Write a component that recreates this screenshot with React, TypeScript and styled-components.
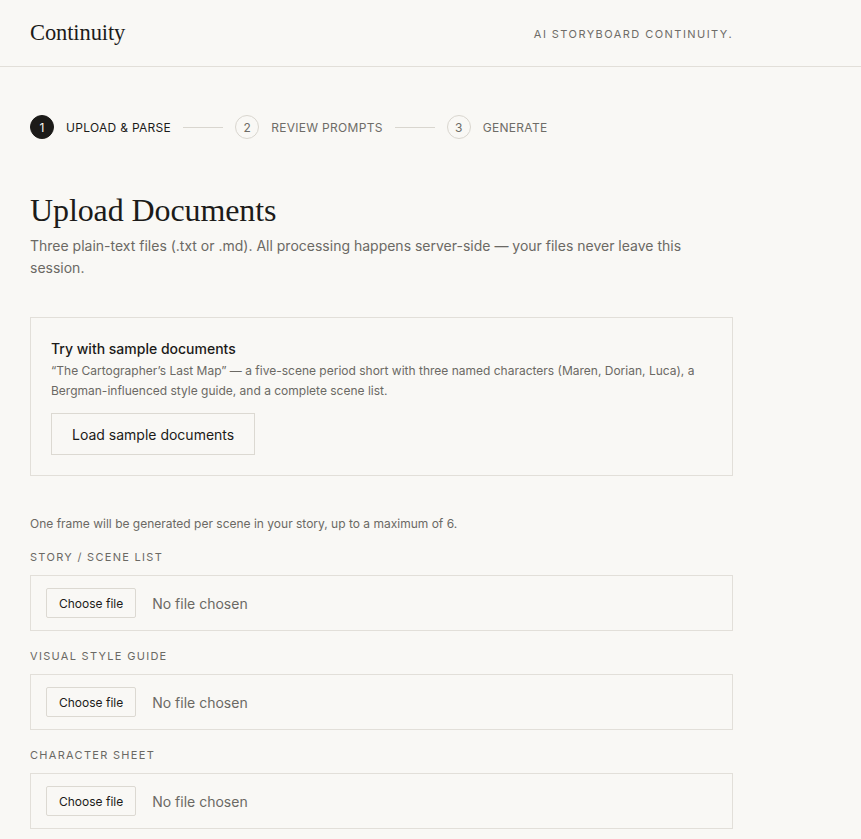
import React from "react";
import styled, { createGlobalStyle } from "styled-components";

const Global = createGlobalStyle`
  html, body { margin: 0; padding: 0; background: #f9f8f5; }
  body { font-family: Inter, "Noto Sans", sans-serif; color: #1c1b19; -webkit-font-smoothing: antialiased; }
  * { box-sizing: border-box; }
`;

const Header = styled.header`
  height: 67px;
  border-bottom: 1px solid #e2dfd9;
  display: flex;
`;

const HeaderInner = styled.div`
  width: 703px;
  margin-left: 30px;
  display: flex;
  align-items: center;
  justify-content: space-between;
`;

const Logo = styled.div`
  font-family: "Liberation Serif", "DejaVu Serif", serif;
  font-size: 22.5px;
  letter-spacing: -0.1px;
  color: #1c1b19;
  padding-bottom: 1px;
`;

const Tagline = styled.div`
  font-size: 11px;
  letter-spacing: 1.45px;
  color: #6e6c67;
  text-transform: uppercase;
  padding-top: 2px;
`;

const Main = styled.main`
  width: 703px;
  margin-left: 30px;
  padding-top: 48px;
`;

const Steps = styled.ol`
  list-style: none;
  margin: 0;
  padding: 0;
  display: flex;
  align-items: center;
  gap: 12px;
`;

const Step = styled.li`
  display: flex;
  align-items: center;
  gap: 12px;
`;

const StepNum = styled.span<{ $active?: boolean }>`
  width: 24px;
  height: 24px;
  border-radius: 50%;
  display: flex;
  align-items: center;
  justify-content: center;
  font-size: 12px;
  background: ${(p) => (p.$active ? "#1c1b19" : "transparent")};
  color: ${(p) => (p.$active ? "#f9f8f5" : "#6e6c67")};
  border: 1px solid ${(p) => (p.$active ? "#1c1b19" : "#d9d6cf")};
`;

const StepLabel = styled.span<{ $active?: boolean }>`
  font-size: 12px;
  letter-spacing: 0.3px;
  text-transform: uppercase;
  color: ${(p) => (p.$active ? "#1c1b19" : "#6e6c67")};
`;

const StepLine = styled.span`
  width: 40px;
  height: 1px;
  background: #d9d6cf;
`;

const Title = styled.h1`
  font-family: "Liberation Serif", "DejaVu Serif", serif;
  font-weight: 400;
  font-size: 32px;
  letter-spacing: -0.1px;
  margin: 53px 0 0;
  line-height: 36px;
`;

const Lead = styled.p`
  margin: 7px 0 0;
  font-size: 14px;
  line-height: 22px;
  color: #6b6964;
`;

const SampleCard = styled.section`
  margin-top: 38px;
  border: 1px solid #e2dfd9;
  padding: 21px 20px 20px;
`;

const SampleTitle = styled.h2`
  margin: 0;
  font-size: 14px;
  font-weight: 500;
  line-height: 20px;
`;

const SampleText = styled.p`
  margin: 2px 0 0;
  font-size: 12px;
  line-height: 20px;
  color: #6b6964;
`;

const LoadButton = styled.button`
  margin-top: 12px;
  height: 42px;
  padding: 0 20px;
  background: transparent;
  border: 1px solid #dcd9d2;
  font-family: Inter, "Noto Sans", sans-serif;
  font-size: 14px;
  color: #1c1b19;
  cursor: pointer;
`;

const Note = styled.p`
  margin: 40px 0 0;
  font-size: 12px;
  line-height: 16px;
  color: #6b6964;
`;

const Field = styled.div`
  margin-top: 18px;
`;

const FieldLabel = styled.div`
  font-size: 11px;
  letter-spacing: 1.3px;
  text-transform: uppercase;
  color: #6b6964;
  line-height: 14px;
  margin-bottom: 11px;
`;

const FileBox = styled.div`
  height: 56px;
  border: 1px solid #e2dfd9;
  display: flex;
  align-items: center;
  padding: 0 15px;
  gap: 16px;
`;

const ChooseButton = styled.button`
  height: 30px;
  padding: 0 12px;
  background: #f9f8f5;
  border: 1px solid #dcd9d2;
  border-radius: 2px;
  font-family: Inter, "Noto Sans", sans-serif;
  font-size: 12px;
  color: #1c1b19;
`;

const FileStatus = styled.span`
  font-size: 14px;
  color: #6b6964;
`;

const steps = [
  { n: 1, label: "Upload & Parse", active: true },
  { n: 2, label: "Review Prompts" },
  { n: 3, label: "Generate" },
];

const fields = ["Story / Scene List", "Visual Style Guide", "Character Sheet"];

export default function App() {
  return (
    <>
      <Global />
      <Header>
        <HeaderInner>
          <Logo>Continuity</Logo>
          <Tagline>AI Storyboard Continuity.</Tagline>
        </HeaderInner>
      </Header>
      <Main>
        <Steps>
          {steps.map((s, i) => (
            <React.Fragment key={s.n}>
              {i > 0 && <StepLine />}
              <Step>
                <StepNum $active={s.active}>{s.n}</StepNum>
                <StepLabel $active={s.active}>{s.label}</StepLabel>
              </Step>
            </React.Fragment>
          ))}
        </Steps>
        <Title>Upload Documents</Title>
        <Lead>
          Three plain-text files (.txt or .md). All processing happens server-side — your files never leave this
          session.
        </Lead>
        <SampleCard>
          <SampleTitle>Try with sample documents</SampleTitle>
          <SampleText>
            “The Cartographer’s Last Map” — a five-scene period short with three named characters (Maren, Dorian, Luca), a
            Bergman-influenced style guide, and a complete scene list.
          </SampleText>
          <LoadButton>Load sample documents</LoadButton>
        </SampleCard>
        <Note>One frame will be generated per scene in your story, up to a maximum of 6.</Note>
        {fields.map((f) => (
          <Field key={f}>
            <FieldLabel>{f}</FieldLabel>
            <FileBox>
              <ChooseButton>Choose file</ChooseButton>
              <FileStatus>No file chosen</FileStatus>
            </FileBox>
          </Field>
        ))}
      </Main>
    </>
  );
}
